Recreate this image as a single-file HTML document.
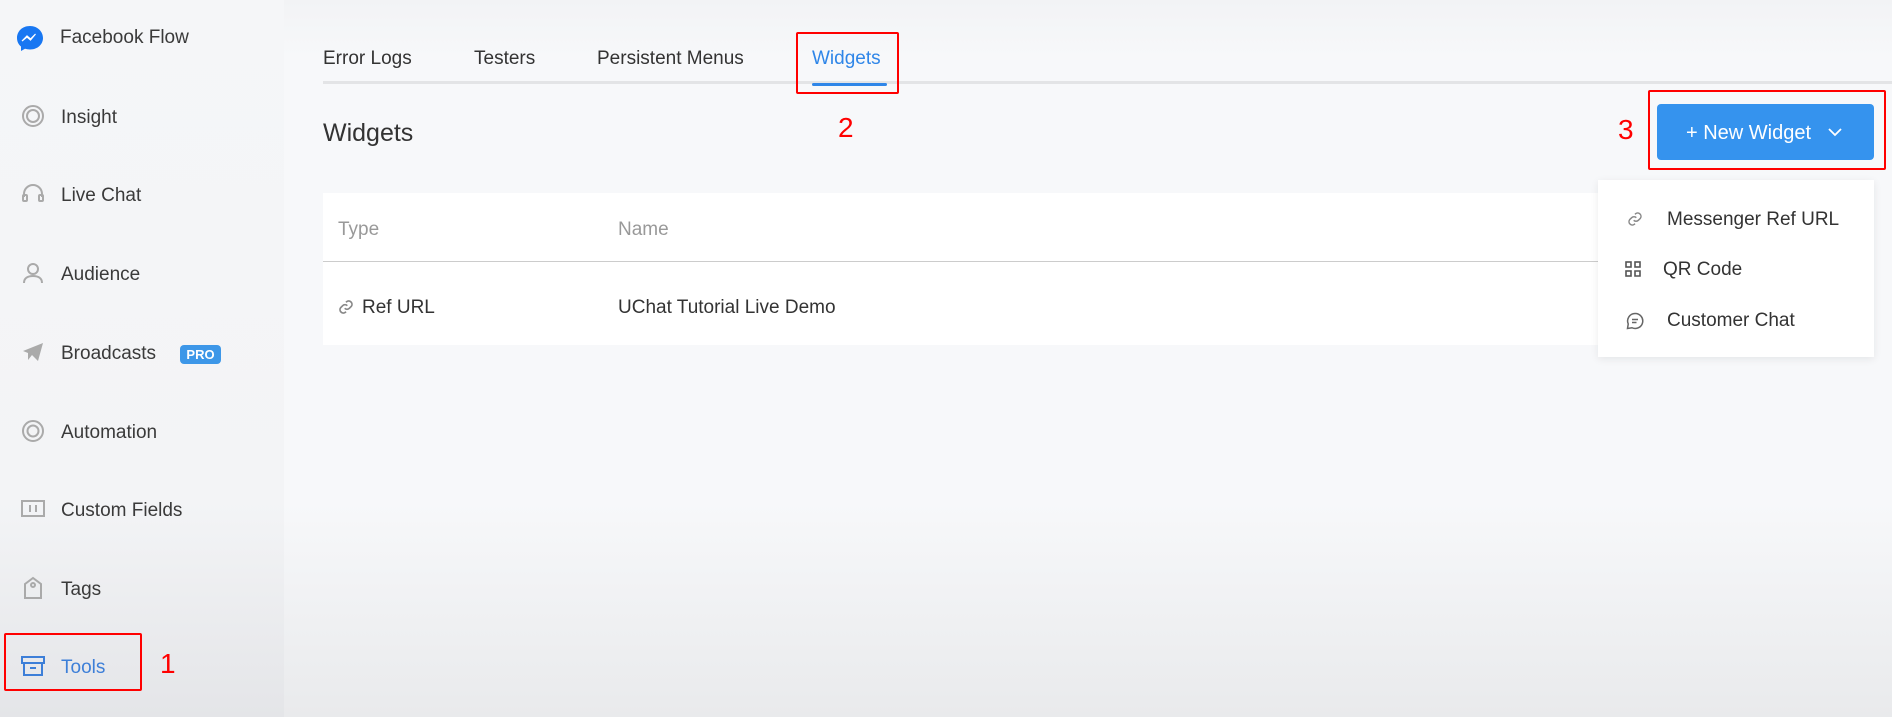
<!DOCTYPE html>
<html><head><meta charset="utf-8"><style>
*{margin:0;padding:0;box-sizing:border-box}
body{width:1892px;height:717px;overflow:hidden;font-family:"Liberation Sans",sans-serif;background:#f6f7f9;position:relative;color:#333}
.abs{position:absolute}
#side{left:0;top:0;width:284px;height:717px;background:linear-gradient(#f5f6f8 0%,#f3f4f6 70%,#e4e5e8 100%)}
#main{left:284px;top:0;width:1608px;height:717px;background:linear-gradient(#f2f3f5 0%,#f7f8fa 8%,#f7f8fa 70%,#e9eaec 100%)}
.it{position:absolute;left:61px;font-size:19px;color:#3a3a3a;line-height:24px}
.ic{position:absolute;left:21px;width:24px;height:24px}
.tab{position:absolute;top:48px;font-size:19px;color:#333}
.red{position:absolute;border:2px solid #f00;border-radius:2px}
.num{position:absolute;color:#f00;font-size:28px}
.dd{font-size:19px;color:#333;position:absolute}
</style></head><body>
<div id="side" class="abs"></div>
<div id="main" class="abs"></div>

<svg class="ic" style="top:24px;left:15px;width:30px;height:28px" viewBox="0 0 30 28"><path d="M15 2C7 2 2 7.5 2 14c0 3.5 1.5 6.5 4 8.5V27l4-2.2c1.5.4 3.2.7 5 .7 8 0 13-5.5 13-11.5S23 2 15 2z" fill="#1877f2"/><path d="M7 17l5-5 3.5 3 5-5-5 6-3.5-3z" fill="#fff" stroke="#fff" stroke-width="1.2"/></svg>
<div class="it" style="top:26px;left:60px">Facebook Flow</div>

<svg class="ic" style="top:104px" viewBox="0 0 24 24" fill="none" stroke="#aaa" stroke-width="2"><circle cx="12" cy="12" r="10"/><circle cx="12" cy="12" r="6"/></svg>
<div class="it" style="top:106px">Insight</div>
<svg class="ic" style="top:182px" viewBox="0 0 24 24" fill="none" stroke="#aaa" stroke-width="2"><path d="M3 15v-3a9 9 0 0118 0v3"/><rect x="2" y="13" width="4" height="6" rx="1"/><rect x="18" y="13" width="4" height="6" rx="1"/></svg>
<div class="it" style="top:184px">Live Chat</div>
<svg class="ic" style="top:261px" viewBox="0 0 24 24" fill="none" stroke="#aaa" stroke-width="2"><circle cx="12" cy="8" r="5"/><path d="M3 22c0-5 4-7 9-7s9 2 9 7"/></svg>
<div class="it" style="top:263px">Audience</div>
<svg class="ic" style="top:340px" viewBox="0 0 24 24" fill="#aaa"><path d="M2 11L22 3l-5 18-6-6-4 5v-7z"/></svg>
<div class="it" style="top:342px">Broadcasts</div>
<div class="abs" style="left:180px;top:345px;width:41px;height:19px;background:#3d97e8;border-radius:4px;color:#fff;font-size:13px;font-weight:bold;text-align:center;line-height:19px">PRO</div>
<svg class="ic" style="top:419px" viewBox="0 0 24 24" fill="none" stroke="#aaa" stroke-width="2"><circle cx="12" cy="12" r="10"/><circle cx="12" cy="12" r="5.5"/></svg>
<div class="it" style="top:421px">Automation</div>
<svg class="ic" style="top:497px" viewBox="0 0 24 24" fill="none" stroke="#aaa" stroke-width="2"><rect x="1" y="4" width="22" height="15"/><path d="M9 8v7M15 8v7"/></svg>
<div class="it" style="top:499px">Custom Fields</div>
<svg class="ic" style="top:576px" viewBox="0 0 24 24" fill="none" stroke="#aaa" stroke-width="2"><path d="M4 8l8-6 8 6v14H4z"/><circle cx="12" cy="9" r="2"/></svg>
<div class="it" style="top:578px">Tags</div>
<svg class="ic" style="top:654px" viewBox="0 0 24 24" fill="none" stroke="#3d7fd8" stroke-width="2"><rect x="1" y="3" width="22" height="6"/><path d="M3 9v12h18V9M9 14h6"/></svg>
<div class="it" style="top:656px;color:#3d7fd8">Tools</div>
<div class="red" style="left:4px;top:633px;width:138px;height:58px"></div>
<div class="num" style="left:160px;top:648px">1</div>

<div class="abs" style="left:323px;top:81px;width:1569px;height:3px;background:#e3e4e6"></div>
<div class="tab" style="left:323px">Error Logs</div>
<div class="tab" style="left:474px">Testers</div>
<div class="tab" style="left:597px">Persistent Menus</div>
<div class="tab" style="left:812px;color:#2f86e8">Widgets</div>
<div class="abs" style="left:812px;top:83px;width:75px;height:3px;background:#2f86e8;border-radius:2px"></div>
<div class="red" style="left:796px;top:32px;width:103px;height:62px"></div>
<div class="num" style="left:838px;top:112px">2</div>

<div class="abs" style="left:323px;top:119px;font-size:25px;color:#333">Widgets</div>

<div class="abs" style="left:323px;top:193px;width:1290px;height:152px;background:#fff"></div>
<div class="abs" style="left:323px;top:261px;width:1290px;height:1px;background:#ccc"></div>
<div class="abs" style="left:338px;top:219px;font-size:19px;color:#999">Type</div>
<div class="abs" style="left:618px;top:219px;font-size:19px;color:#999">Name</div>
<svg class="abs" style="left:338px;top:299px" width="16" height="16" viewBox="0 0 24 24" fill="none" stroke="#888" stroke-width="2.5"><path d="M10 14a5 5 0 007 0l3-3a5 5 0 00-7-7l-1 1M14 10a5 5 0 00-7 0l-3 3a5 5 0 007 7l1-1"/></svg>
<div class="abs" style="left:362px;top:297px;font-size:19px">Ref URL</div>
<div class="abs" style="left:618px;top:297px;font-size:19px">UChat Tutorial Live Demo</div>

<div class="abs" style="left:1657px;top:104px;width:217px;height:56px;background:#3593ee;border-radius:4px;color:#fff;font-size:20px;line-height:58px;padding-left:29px">+ New Widget</div>
<svg class="abs" style="left:1827px;top:126px" width="16" height="12" viewBox="0 0 16 12" fill="none" stroke="#fff" stroke-width="1.8"><path d="M2 3l6 6 6-6"/></svg>
<div class="red" style="left:1648px;top:90px;width:238px;height:80px"></div>
<div class="num" style="left:1618px;top:114px">3</div>

<div class="abs" style="left:1598px;top:180px;width:276px;height:177px;background:#fff;box-shadow:0 2px 8px rgba(0,0,0,.08)"></div>
<svg class="abs" style="left:1627px;top:211px" width="16" height="16" viewBox="0 0 24 24" fill="none" stroke="#888" stroke-width="2.2"><path d="M10 14a5 5 0 007 0l3-3a5 5 0 00-7-7l-1 1M14 10a5 5 0 00-7 0l-3 3a5 5 0 007 7l1-1"/></svg>
<div class="dd" style="left:1667px;top:209px">Messenger Ref URL</div>
<svg class="abs" style="left:1625px;top:261px" width="16" height="16" viewBox="0 0 16 16" fill="none" stroke="#555" stroke-width="1.6"><rect x="1" y="1" width="5" height="5"/><rect x="10" y="1" width="5" height="5"/><rect x="1" y="10" width="5" height="5"/><path d="M10 10h5v5h-5z"/></svg>
<div class="dd" style="left:1663px;top:259px">QR Code</div>
<svg class="abs" style="left:1626px;top:312px" width="18" height="18" viewBox="0 0 24 24" fill="none" stroke="#666" stroke-width="2"><path d="M12 2a10 10 0 00-9 14l-1 6 6-1A10 10 0 1012 2z"/><path d="M8 10h8M8 14h6"/></svg>
<div class="dd" style="left:1667px;top:310px">Customer Chat</div>
</body></html>
